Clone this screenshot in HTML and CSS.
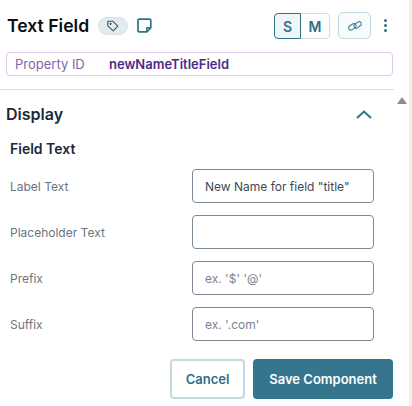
FILE: index.html
```html
<!DOCTYPE html>
<html lang="en">
<head>
  <meta charset="UTF-8">
  <title>Text Field</title>
  <meta name="viewport" content="width=device-width, initial-scale=1.0">
  <link rel="stylesheet" href="styles.css">
</head>
<body>
  <div class="panel">
    <div class="header">
      <h1>Text Field</h1>
      <span class="tag-pill">
        <svg width="14" height="14" viewBox="0 0 14 14" fill="none" stroke="#3f5563" stroke-width="1.1" stroke-linejoin="round"><path d="M1.8 2.2h5l5 5-4.6 4.6-5.4-5z"/><circle cx="4.6" cy="4.8" r=".6"/></svg>
      </span>
      <svg class="note" width="15" height="15" viewBox="0 0 15 15" fill="none" stroke="#2f7188" stroke-width="1.7" stroke-linejoin="round"><path d="M2 1.2h10.4a1.4 1.4 0 0 1 1.4 1.4v7.2l-4 4H2a1 1 0 0 1-1-1V2.2a1 1 0 0 1 1-1z"/><path d="M13.6 9.8H9.8v3.8" stroke-width="1.5"/></svg>
      <div class="spacer"></div>
      <div class="size-group">
        <span class="size active">S</span>
        <span class="size">M</span>
      </div>
      <span class="link-btn">
        <svg width="14" height="14" viewBox="0 0 14 14" fill="none" stroke="#3b7a92" stroke-width="1"><rect x=".4" y="5.6" width="8" height="4.4" rx="2.2" transform="rotate(-35 4.4 7.8)"/><rect x="5.6" y="3.8" width="8" height="4.4" rx="2.2" transform="rotate(-35 9.6 6)"/></svg>
      </span>
      <span class="dots"><i></i><i></i><i></i></span>
    </div>

    <div class="property">
      <span class="property-label">Property ID</span>
      <span class="property-value">newNameTitleField</span>
    </div>

    <div class="divider"></div>

    <div class="section-head">
      <h2>Display</h2>
      <svg width="16" height="9" viewBox="0 0 16 9" fill="none" stroke="#2f7188" stroke-width="2"><path d="M1 8l7-6.5L15 8"/></svg>
    </div>

    <h3>Field Text</h3>

    <div class="fields">
      <div class="field">
        <label>Label Text</label>
        <div class="input">New Name for field "title"</div>
      </div>
      <div class="field">
        <label>Placeholder Text</label>
        <div class="input"></div>
      </div>
      <div class="field">
        <label>Prefix</label>
        <div class="input hint">ex. '$' '@'</div>
      </div>
      <div class="field">
        <label>Suffix</label>
        <div class="input hint">ex. '.com'</div>
      </div>
    </div>

    <div class="actions">
      <button class="cancel">Cancel</button>
      <button class="save">Save Component</button>
    </div>
  </div>

  <div class="scroll-track"><span class="scroll-up"></span></div>
</body>
</html>
```

FILE: styles.css
```css
* { box-sizing: border-box; }
body {
  margin: 0;
  width: 412px;
  height: 406px;
  overflow: hidden;
  position: relative;
  background-color: #fff;
  font-family: Inter, 'Noto Sans', sans-serif;
  color: #16202c;
}

.panel {
  width: 394px;
  height: 406px;
  padding-top: 12px;
}

.header {
  display: flex;
  align-items: center;
  height: 27px;
  padding-left: 7px;
}

h1 {
  margin: 0;
  font-size: 17.6px;
  font-weight: 600;
  color: #0b0f14;
}

.tag-pill {
  display: flex;
  align-items: center;
  justify-content: center;
  width: 30px;
  height: 18px;
  margin-left: 9px;
  background-color: #e4ebf0;
  border: 1px solid #d8e1e7;
  border-radius: 9px;
}

.note { margin-left: 9px; }

.spacer { flex-grow: 1; }

.size-group {
  display: flex;
  width: 56px;
  height: 26px;
  margin-top: 1px;
  border: 1px solid #cfdde4;
  border-radius: 4px;
}

.size {
  display: flex;
  align-items: center;
  justify-content: center;
  flex: 1;
  font-size: 14px;
  font-weight: 600;
  color: #2f6f87;
}

.size.active {
  margin: -1px 0 -1px -1px;
  flex: 0 0 27px;
  background-color: #eff6fa;
  border: 1px solid #2f7188;
  border-radius: 4px 0 0 4px;
}

.link-btn {
  display: flex;
  align-items: center;
  justify-content: center;
  width: 33px;
  height: 27px;
  margin-left: 8px;
  background-color: #f7fbfc;
  border: 1px solid #c5d8e0;
  border-radius: 5px;
}

.dots {
  display: flex;
  flex-direction: column;
  gap: 2px;
  width: 5px;
  margin: 0 6px 0 12px;
}

.dots i {
  width: 3px;
  height: 3px;
  margin-left: 1px;
  background-color: #2f6f87;
  border-radius: 50%;
}

.property {
  display: flex;
  align-items: center;
  height: 24px;
  margin: 13px 1px 0 6px;
  padding-left: 8px;
  font-size: 13px;
  border: 1px solid #e0c8ea;
  border-radius: 4px;
}

.property-label {
  width: 94px;
  color: #8563ab;
}

.property-value {
  font-weight: 600;
  color: #4d2a86;
}

.divider {
  height: 1px;
  margin-top: 13px;
  background-color: #d5dfe3;
}

.section-head {
  display: flex;
  align-items: center;
  justify-content: space-between;
  height: 24px;
  margin-top: 12px;
  padding: 0 22px 0 6px;
}

h2 {
  margin: 0;
  font-size: 16px;
  font-weight: 600;
  color: #1b2a3a;
}

h3 {
  margin: 13px 0 0 10px;
  font-size: 14px;
  line-height: 20px;
  font-weight: 600;
  color: #1b2a3a;
}

.fields {
  display: flex;
  flex-direction: column;
  gap: 12px;
  margin-top: 10px;
  padding: 0 20px 0 10px;
}

.field {
  display: flex;
  align-items: center;
  justify-content: space-between;
}

.field label {
  font-size: 12px;
  color: #6b7480;
}

.input {
  display: flex;
  align-items: center;
  width: 182px;
  height: 34px;
  padding-left: 12px;
  font-size: 12px;
  color: #3f4a56;
  background-color: #fff;
  border: 1px solid #7e8a96;
  border-radius: 4px;
}

.input.hint { color: #7a838d; }

.actions {
  display: flex;
  justify-content: flex-end;
  gap: 8px;
  margin: 18px 1px 0 0;
}

.actions button {
  height: 40px;
  font-family: inherit;
  font-size: 13px;
  font-weight: 600;
  border-radius: 4px;
}

.cancel {
  width: 75px;
  color: #2f6f87;
  background-color: #fff;
  border: 2px solid #c6d9e1;
}

.save {
  width: 140px;
  color: #fff;
  background-color: #35758d;
  border: none;
}

.scroll-track {
  position: absolute;
  top: 0;
  right: 0;
  width: 18px;
  height: 406px;
  border-right: 3px solid #f1f1f1;
}

.scroll-up {
  position: absolute;
  top: 97px;
  left: 3px;
  border-left: 5px solid transparent;
  border-right: 5px solid transparent;
  border-bottom: 7px solid #8c8c8c;
}
```
